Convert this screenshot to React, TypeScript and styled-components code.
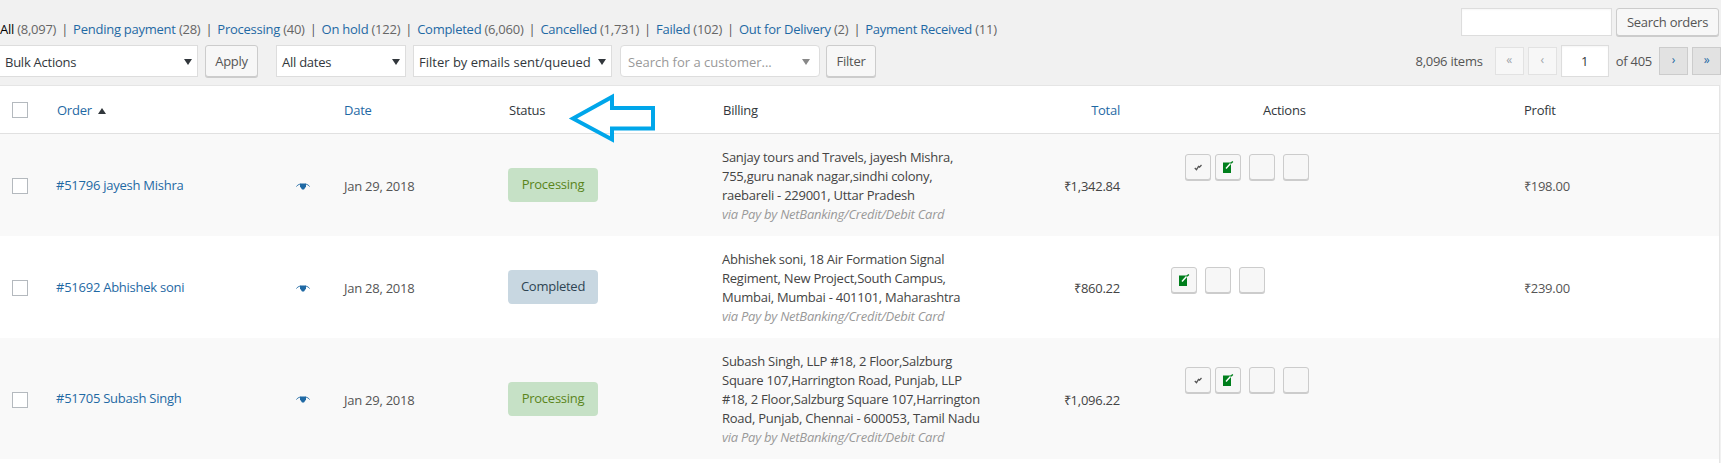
import React from "react";
import styled, { createGlobalStyle } from "styled-components";

const GlobalStyle = createGlobalStyle`
  html, body {
    margin: 0;
    padding: 0;
    background: #f1f1f1;
  }
  body {
    font-family: "Open Sans", "Liberation Sans", sans-serif;
    font-size: 13px;
    letter-spacing: -0.25px;
    color: #444;
  }
  * {
    box-sizing: border-box;
  }
`;

const Page = styled.div`
  position: relative;
  width: 1721px;
  height: 463px;
  overflow: hidden;
  padding-right: 1px;
`;

const TopBar = styled.div`
  display: flex;
  justify-content: space-between;
  height: 45px;
  padding: 8px 1px 0 0;
`;

const StatusLinks = styled.ul`
  display: flex;
  margin: 11px 0 0;
  padding: 0;
  list-style: none;
  line-height: 20px;
  height: 20px;
  color: #666;
`;

const StatusItem = styled.li`
  white-space: pre;
  & + &::before {
    content: "|";
    margin: 0 5px;
    color: #555;
  }
`;

const StatusLink = styled.a<{ $current?: boolean }>`
  color: ${(p) => (p.$current ? "#000" : "#1f69a4")};
`;

const SearchBox = styled.div`
  display: flex;
  gap: 4px;
`;

const TextInput = styled.div<{ $w: number; $h: number }>`
  width: ${(p) => p.$w}px;
  height: ${(p) => p.$h}px;
  background: #fff;
  border: 1px solid #ddd;
  box-shadow: inset 0 1px 2px rgba(0, 0, 0, 0.04);
  color: #32373c;
  line-height: ${(p) => p.$h - 2}px;
  text-align: center;
`;

const Button = styled.div<{ $w: number; $h?: number }>`
  width: ${(p) => p.$w}px;
  height: ${(p) => p.$h ?? 32}px;
  background: #f7f7f7;
  border: 1px solid #ccc;
  border-radius: 3px;
  box-shadow: 0 1px 0 #ccc;
  color: #555;
  line-height: ${(p) => (p.$h ?? 32) - 2}px;
  text-align: center;
`;

const Toolbar = styled.div`
  display: flex;
  align-items: flex-start;
  height: 40px;
  margin-right: -1px;
`;

const Select = styled.div<{
  $w: number;
  $mr: number;
  $rounded?: boolean;
  $loose?: boolean;
}>`
  display: flex;
  align-items: center;
  justify-content: space-between;
  width: ${(p) => p.$w}px;
  height: 32px;
  margin-right: ${(p) => p.$mr}px;
  padding: 1px ${(p) => (p.$rounded ? 9 : 5)}px 0 ${(p) => (p.$rounded ? 7 : 5)}px;
  background: #fff;
  border: 1px solid #ddd;
  border-radius: ${(p) => (p.$rounded ? 4 : 0)}px;
  color: ${(p) => (p.$rounded ? "#999" : "#32373c")};
  letter-spacing: ${(p) => (p.$loose ? 0 : -0.25)}px;
  white-space: nowrap;
`;

const BulkSelect = styled(Select)`
  margin-left: -1px;
`;

const ToolbarButton = styled(Button)`
  margin-right: 18px;
`;

const FilterButton = styled(Button)`
  margin-right: 0;
`;

const Pagination = styled.div`
  display: flex;
  align-items: center;
  height: 32px;
  margin-left: auto;
  color: #555;
`;

const ItemCount = styled.span`
  margin-right: 12px;
`;

const PageLink = styled.div<{ $on?: boolean }>`
  width: 29px;
  height: 28px;
  margin-right: 4px;
  background: ${(p) => (p.$on ? "#e2e2e2" : "#f7f7f7")};
  border: 1px solid ${(p) => (p.$on ? "#ccc" : "#e2e2e2")};
  color: ${(p) => (p.$on ? "#1f69a4" : "#a0a5aa")};
  font-size: 12px;
  line-height: 24px;
  text-align: center;
  &:last-child {
    margin-right: 0;
  }
`;

const PageOf = styled.span`
  margin: 0 7px;
`;

const Table = styled.div`
  background: #fff;
  border-top: 1px solid #e5e5e5;
  border-right: 1px solid #e5e5e5;
  height: 378px;
`;

const columns = "50px 294px 164px 214px 278px 120px 404px 1fr";

const HeadRow = styled.div`
  display: grid;
  grid-template-columns: ${columns};
  align-items: center;
  height: 48px;
  border-bottom: 1px solid #e1e1e1;
  color: #32373c;
`;

const HeadCell = styled.div<{ $pl?: number; $right?: boolean }>`
  padding-left: ${(p) => p.$pl ?? 0}px;
  text-align: ${(p) => (p.$right ? "right" : "left")};
`;

const SortLink = styled.a`
  color: #1f69a4;
`;

const SortArrow = styled.svg`
  margin-left: 6px;
  vertical-align: 1px;
`;

const Row = styled.div`
  display: grid;
  grid-template-columns: ${columns};
  align-items: center;
  padding: 14px 0 12px;
  &:nth-child(even) {
    background: #f9f9f9;
  }
`;

const Check = styled.div`
  width: 16px;
  height: 16px;
  margin-left: 12px;
  background: #fff;
  border: 1px solid #b4b9be;
`;

const OrderCell = styled.div`
  display: flex;
  align-items: center;
  padding-left: 6px;
`;

const OrderLink = styled.a`
  flex: 0 0 240px;
  margin-bottom: 3px;
  color: #1f69a4;
`;

const DateCell = styled.div`
  color: #555;
`;

const Pill = styled.div<{ $kind: "processing" | "completed" }>`
  width: 90px;
  height: 34px;
  margin-bottom: 2px;
  background: ${(p) => (p.$kind === "processing" ? "#c6e1c6" : "#c8d7e1")};
  border-radius: 4px;
  color: ${(p) => (p.$kind === "processing" ? "#5b841b" : "#2e4453")};
  line-height: 33px;
  text-align: center;
`;

const Billing = styled.div`
  line-height: 19px;
  color: #444;
  white-space: nowrap;
`;

const BillingLine = styled.div``;

const Via = styled.div`
  color: #999;
  font-style: italic;
`;

const Amount = styled.div`
  text-align: right;
  color: #444;
`;

const Profit = styled.div`
  color: #555;
`;

const Actions = styled.div<{ $left: number; $top: number }>`
  display: flex;
  align-self: start;
  gap: 8px;
  margin-top: ${(p) => p.$top}px;
  padding-left: ${(p) => p.$left}px;
`;

const ActionButton = styled.div<{ $tight?: boolean }>`
  display: flex;
  align-items: center;
  justify-content: center;
  width: 26px;
  height: 26px;
  margin-right: ${(p) => (p.$tight ? -4 : 0)}px;
  background: #f7f7f7;
  border: 1px solid #ccc;
  border-radius: 3px;
  box-shadow: 0 1px 0 #ccc;
`;

const Arrow = styled.svg`
  position: absolute;
  left: 565px;
  top: 90px;
`;

const Caret = ({ color = "#32373c" }: { color?: string }) => (
  <svg width="8" height="6" viewBox="0 0 8 6">
    <path d="M0 0h8L4 6z" fill={color} />
  </svg>
);

const EyeIcon = () => (
  <svg width="14" height="7" viewBox="0 0 14 7">
    <path d="M.5 3.5C1.5 2 3 1.2 4.5 1.2M13.5 3.5C12.5 2 11 1.2 9.5 1.2" stroke="#1f69a4" strokeWidth="1" fill="none" />
    <path d="M4 .5h6v3L8 6.5H6L4 3.5z" fill="#1f69a4" />
  </svg>
);

const CheckIcon = () => (
  <svg width="8" height="7" viewBox="0 0 8 7">
    <path d="M.8 4l1.7 1.8L4.5 2.5l1 .6L7.5 1" stroke="#555" strokeWidth="1.3" fill="none" />
  </svg>
);

const NoteIcon = () => (
  <svg width="11" height="12" viewBox="0 0 11 12">
    <path d="M0 1.5h8V12H0z" fill="#007f1c" />
    <path d="M3 7.5L7.5 2.5" stroke="#fff" strokeWidth="1.4" />
    <path d="M8 2.2L9.8.4" stroke="#007f1c" strokeWidth="1.4" />
  </svg>
);

type Order = {
  id: string;
  date: string;
  status: "processing" | "completed";
  billing: string[];
  total: string;
  profit?: string;
  actionsLeft: number;
  actionsTop: number;
};

const orders: Order[] = [
  {
    id: "#51796 jayesh Mishra",
    date: "Jan 29, 2018",
    status: "processing",
    billing: [
      "Sanjay tours and Travels, jayesh Mishra,",
      "755,guru nanak nagar,sindhi colony,",
      "raebareli - 229001, Uttar Pradesh",
    ],
    total: "₹1,342.84",
    profit: "₹198.00",
    actionsLeft: 65,
    actionsTop: 6,
  },
  {
    id: "#51692 Abhishek soni",
    date: "Jan 28, 2018",
    status: "completed",
    billing: [
      "Abhishek soni, 18 Air Formation Signal",
      "Regiment, New Project,South Campus,",
      "Mumbai, Mumbai - 401101, Maharashtra",
    ],
    total: "₹860.22",
    profit: "₹239.00",
    actionsLeft: 51,
    actionsTop: 17,
  },
  {
    id: "#51705 Subash Singh",
    date: "Jan 29, 2018",
    status: "processing",
    billing: [
      "Subash Singh, LLP #18, 2 Floor,Salzburg",
      "Square 107,Harrington Road, Punjab, LLP",
      "#18, 2 Floor,Salzburg Square 107,Harrington",
      "Road, Punjab, Chennai - 600053, Tamil Nadu",
    ],
    total: "₹1,096.22",
    actionsLeft: 65,
    actionsTop: 15,
  },
];

const statuses = [
  ["All", "(8,097)"],
  ["Pending payment", "(28)"],
  ["Processing", "(40)"],
  ["On hold", "(122)"],
  ["Completed", "(6,060)"],
  ["Cancelled", "(1,731)"],
  ["Failed", "(102)"],
  ["Out for Delivery", "(2)"],
  ["Payment Received", "(11)"],
];

const OrderRow = ({ order }: { order: Order }) => (
  <Row>
    <Check />
    <OrderCell>
      <OrderLink>{order.id}</OrderLink>
      <EyeIcon />
    </OrderCell>
    <DateCell>{order.date}</DateCell>
    <Pill $kind={order.status}>
      {order.status === "processing" ? "Processing" : "Completed"}
    </Pill>
    <Billing>
      {order.billing.map((line) => (
        <BillingLine key={line}>{line}</BillingLine>
      ))}
      <Via>via Pay by NetBanking/Credit/Debit Card</Via>
    </Billing>
    <Amount>{order.total}</Amount>
    <Actions $left={order.actionsLeft} $top={order.actionsTop}>
      {order.status === "processing" && (
        <ActionButton $tight>
          <CheckIcon />
        </ActionButton>
      )}
      <ActionButton>
        <NoteIcon />
      </ActionButton>
      <ActionButton />
      <ActionButton />
    </Actions>
    <Profit>{order.profit}</Profit>
  </Row>
);

export default function App() {
  return (
    <Page>
      <GlobalStyle />
      <TopBar>
        <StatusLinks>
          {statuses.map(([label, count], index) => (
            <StatusItem key={label}>
              <StatusLink $current={index === 0}>{label}</StatusLink> {count}
            </StatusItem>
          ))}
        </StatusLinks>
        <SearchBox>
          <TextInput $w={151} $h={28} />
          <Button $w={103} $h={28}>
            Search orders
          </Button>
        </SearchBox>
      </TopBar>
      <Toolbar>
        <BulkSelect $w={199} $mr={7}>
          Bulk Actions
          <Caret />
        </BulkSelect>
        <ToolbarButton $w={53}>Apply</ToolbarButton>
        <Select $w={130} $mr={7}>
          All dates
          <Caret />
        </Select>
        <Select $w={199} $mr={8} $loose>
          Filter by emails sent/queued
          <Caret />
        </Select>
        <Select $w={200} $mr={6} $rounded $loose>
          Search for a customer...
          <Caret color="#888" />
        </Select>
        <FilterButton $w={50}>Filter</FilterButton>
        <Pagination>
          <ItemCount>8,096 items</ItemCount>
          <PageLink>«</PageLink>
          <PageLink>‹</PageLink>
          <TextInput $w={48} $h={32}>
            1
          </TextInput>
          <PageOf>of 405</PageOf>
          <PageLink $on>›</PageLink>
          <PageLink $on>»</PageLink>
        </Pagination>
      </Toolbar>
      <Table>
        <HeadRow>
          <Check />
          <HeadCell $pl={7}>
            <SortLink>Order</SortLink>
            <SortArrow width="8" height="6" viewBox="0 0 8 6">
              <path d="M4 0l4 6H0z" fill="#32373c" />
            </SortArrow>
          </HeadCell>
          <HeadCell>
            <SortLink>Date</SortLink>
          </HeadCell>
          <HeadCell $pl={1}>Status</HeadCell>
          <HeadCell $pl={1}>Billing</HeadCell>
          <HeadCell $right>
            <SortLink>Total</SortLink>
          </HeadCell>
          <HeadCell $pl={143}>Actions</HeadCell>
          <HeadCell>Profit</HeadCell>
        </HeadRow>
        {orders.map((order) => (
          <OrderRow key={order.id} order={order} />
        ))}
      </Table>
      <Arrow width="100" height="60" viewBox="0 0 100 60">
        <path
          d="M8 28.5L47 7v11h41v20.5H47v11z"
          fill="none"
          stroke="#00a6ea"
          strokeWidth="4"
        />
      </Arrow>
    </Page>
  );
}
